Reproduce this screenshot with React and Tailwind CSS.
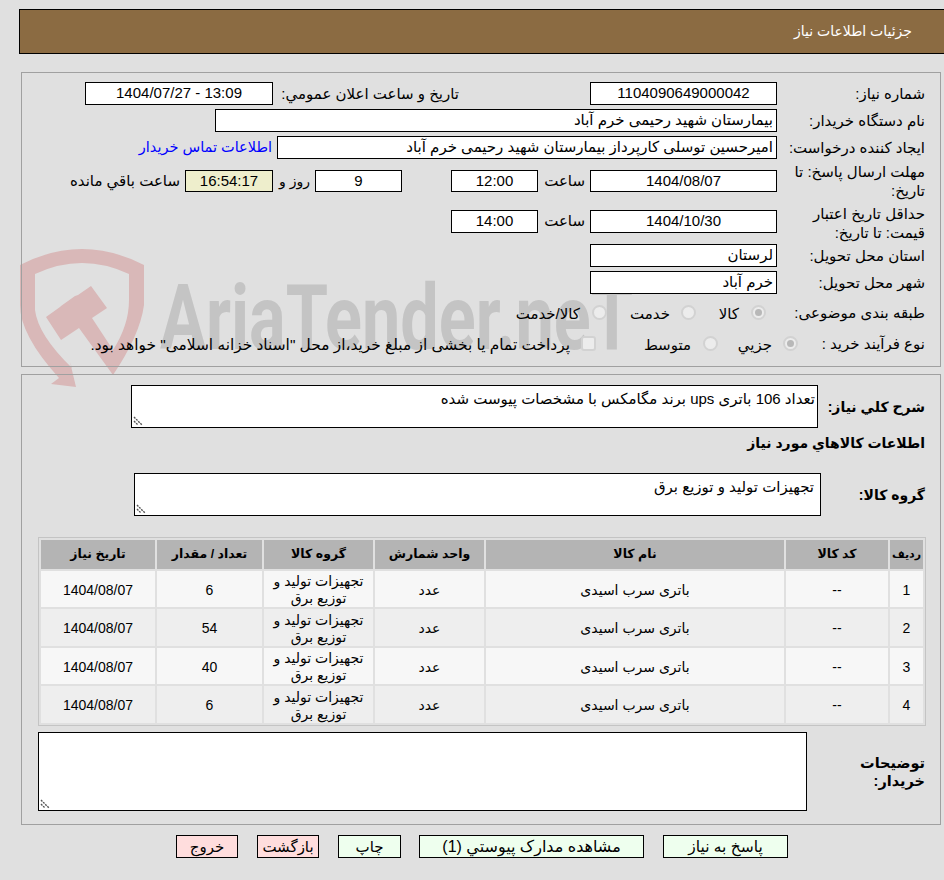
import React from "react";

const boxBase = "h-full shrink-0 border border-black bg-white flex items-center overflow-hidden whitespace-nowrap";

function Box({ w, center, children, extra = "" }) {
  return (
    <div className={`${boxBase} ${w} ${center ? "justify-center" : "justify-start pr-[3px]"} ${extra}`}>{children}</div>
  );
}

function Radio({ checked }) {
  return (
    <div className="flex h-[15px] w-[15px] shrink-0 items-center justify-center rounded-full border-2 border-[#d2d2d2] bg-[#ececec]">
      {checked ? <div className="h-[7px] w-[7px] rounded-full bg-[#b8b8b8]" /> : null}
    </div>
  );
}

function Grip() {
  return (
    <svg width="10" height="10" viewBox="0 0 10 10" className="absolute bottom-[1px] left-[1px]">
      <path d="M1 1 L9 9" stroke="#555555" strokeWidth="1.4" strokeDasharray="2 1" fill="none" />
      <path d="M1 5 L5 9" stroke="#555555" strokeWidth="1.4" strokeDasharray="2 1" fill="none" />
    </svg>
  );
}

function Btn({ w, pink, ms, size = "", children }) {
  return (
    <div
      className={`h-[23px] ${w} ${ms} ${size} shrink-0 border border-black pt-[1px] flex items-center justify-center whitespace-nowrap ${
        pink ? "bg-[#ffdddd]" : "bg-[#eeffee]"
      }`}
    >
      {children}
    </div>
  );
}

const rows = [
  { n: "1", q: "6", bg: "bg-[#f7f7f7]", h: "h-[36px]" },
  { n: "2", q: "54", bg: "bg-[#eeeeee]", h: "h-[37px]" },
  { n: "3", q: "40", bg: "bg-[#f7f7f7]", h: "h-[36px]" },
  { n: "4", q: "6", bg: "bg-[#eeeeee]", h: "h-[37px]" },
];

const th = "bg-[#b4b4b4] font-bold text-center text-[12.5px] p-0 whitespace-nowrap";
const td = "text-center p-0 pt-[2px] leading-[17px]";

export default function App() {
  return (
    <div
      dir="rtl"
      className="relative min-h-[880px] w-[944px] overflow-hidden bg-[#e0e0e0] text-[15px] text-black [font-family:'Liberation_Sans','DejaVu_Sans',sans-serif]"
    >
      {/* watermark */}
      <div aria-hidden="true" className="absolute left-0 top-0 z-0">
        <svg width="160" height="400" viewBox="0 0 160 400" className="absolute left-0 top-0">
          <path
            fill="#d9b8b8"
            d="M20 265 Q82 233 144 265 L144 305 Q140 335 113 375 L79 328 L61 340 L46 317 L60 307 L61 306 L75 296 L78 295 L91 286 L107 308 L92 318 L113 350 Q129 325 129 300 L129 274 Q82 252 35 274 L35 310 Q38 335 72 368 L70 362 L76 387 L51 384 L59 378 Q20 335 20 305 Z"
          />
        </svg>
        <span
          dir="ltr"
          className="absolute left-[160px] top-[264px] origin-left scale-x-[0.76] whitespace-nowrap text-[90px] font-bold leading-[110px] text-[#c4c4c4] [font-family:'Roboto',sans-serif]"
        >
          AriaTender.neT
        </span>
      </div>

      <div className="relative z-10">
        {/* header */}
        <div className="h-[9px]" />
        <div className="ml-[19px] -mr-[2px] h-[45px] border border-black bg-[#8b6b42] pr-[33px] flex items-center text-white text-[14px]">
          جزئیات اطلاعات نیاز
        </div>

        {/* panel 1 */}
        <div className="ml-[21px] mr-[3px] mt-[18px] border border-[#a0a0a0] pt-[9px] pb-[11px] pr-[15px]">
          <div className="flex h-[23px] items-center">
            <div className="w-[148px] shrink-0 pt-[2px]">شماره نیاز:</div>
            <Box w="w-[187px]" center>1104090649000042</Box>
            <div className="ms-[131px] w-[186px] shrink-0 pt-[2px] whitespace-nowrap">تاریخ و ساعت اعلان عمومي:</div>
            <Box w="w-[188px]" center><span dir="ltr">1404/07/27 - 13:09</span></Box>
          </div>
          <div className="mt-[4px] flex h-[23px] items-center">
            <div className="w-[148px] shrink-0 pt-[2px]">نام دستگاه خریدار:</div>
            <Box w="w-[562px]">بیمارستان شهید رحیمی خرم آباد</Box>
          </div>
          <div className="mt-[4px] flex h-[23px] items-center">
            <div className="w-[148px] shrink-0 pt-[2px] whitespace-nowrap">ایجاد کننده درخواست:</div>
            <Box w="w-[500px]">امیرحسین توسلی کارپرداز بیمارستان شهید رحیمی خرم آباد</Box>
            <div className="ms-[5px] whitespace-nowrap text-[14.5px] text-[#0000ff]">اطلاعات تماس خریدار</div>
          </div>
          <div className="mt-[5px] flex h-[34px] items-center">
            <div className="w-[148px] shrink-0 leading-[19px]">مهلت ارسال پاسخ: تا تاریخ:</div>
            <div className="flex h-[22px] items-center">
              <Box w="w-[187px]" center>1404/08/07</Box>
              <div className="w-[52px] shrink-0 pr-[5px] whitespace-nowrap">ساعت</div>
              <Box w="w-[87px]" center>12:00</Box>
              <Box w="w-[87px] ms-[49px]" center>9</Box>
              <div className="w-[42px] shrink-0 pr-[5px] whitespace-nowrap text-[14px]">روز و</div>
              <Box w="w-[88px]" center extra="bg-[#eeeecc]!">16:54:17</Box>
              <div className="pr-[5px] whitespace-nowrap">ساعت باقي مانده</div>
            </div>
          </div>
          <div className="mt-[6px] flex h-[35px] items-center">
            <div className="w-[148px] shrink-0 pt-[2px] leading-[19px]">حداقل تاریخ اعتبار قیمت: تا تاریخ:</div>
            <div className="flex h-[23px] items-center">
              <Box w="w-[187px]" center>1404/10/30</Box>
              <div className="w-[52px] shrink-0 pr-[5px] whitespace-nowrap">ساعت</div>
              <Box w="w-[87px]" center>14:00</Box>
            </div>
          </div>
          <div className="mt-[5px] flex h-[23px] items-center">
            <div className="w-[148px] shrink-0 pt-[2px]">استان محل تحویل:</div>
            <Box w="w-[187px]">لرستان</Box>
          </div>
          <div className="mt-[4px] flex h-[23px] items-center">
            <div className="w-[148px] shrink-0 pt-[2px]">شهر محل تحویل:</div>
            <Box w="w-[187px]">خرم آباد</Box>
          </div>
          <div className="mt-[7px] flex h-[23px] items-center">
            <div className="w-[159px] shrink-0 pt-[2px] whitespace-nowrap">طبقه بندی موضوعی:</div>
            <Radio checked />
            <div className="w-[55px] shrink-0 pt-[3px] pr-[12px] whitespace-nowrap">کالا</div>
            <Radio />
            <div className="w-[74px] shrink-0 pt-[3px] pr-[11px] whitespace-nowrap">خدمت</div>
            <Radio />
            <div className="pt-[3px] pr-[12px] whitespace-nowrap">کالا/خدمت</div>
          </div>
          <div className="mt-[8px] flex h-[23px] items-center">
            <div className="w-[127px] shrink-0 pt-[2px] whitespace-nowrap">نوع فرآیند خرید :</div>
            <Radio checked />
            <div className="w-[65px] shrink-0 pt-[3px] pr-[11px] whitespace-nowrap">جزیي</div>
            <Radio />
            <div className="w-[107px] shrink-0 pt-[3px] pr-[12px] whitespace-nowrap">متوسط</div>
            <div className="h-[15px] w-[15px] shrink-0 rounded-[3px] border-2 border-[#d2d2d2] bg-[#ececec]" />
            <div className="pt-[3px] pr-[11px] text-[15.4px] whitespace-nowrap">پرداخت تمام یا بخشی از مبلغ خرید،از محل "اسناد خزانه اسلامی" خواهد بود.</div>
          </div>
        </div>

        {/* panel 2 */}
        <div className="ml-[21px] mr-[3px] mt-[7px] border border-[#a0a0a0] pt-[10px] pb-[13px] pr-[15px]">
          <div className="flex h-[43px] items-center">
            <div className="w-[107px] shrink-0 pt-[2px] text-[14px] font-bold whitespace-nowrap">شرح کلي نیاز:</div>
            <div className="relative h-[43px] w-[687px] shrink-0 border border-black bg-white px-[2px] py-[2px]">
              تعداد 106 باتری ups برند مگامکس با مشخصات پیوست شده
              <Grip />
            </div>
          </div>
          <div className="mt-[3px] flex h-[24px] items-center text-[14px] font-bold">اطلاعات کالاهاي مورد نیاز</div>
          <div className="mt-[18px] flex h-[43px] items-center">
            <div className="w-[104px] shrink-0 pt-[2px] text-[14px] font-bold whitespace-nowrap">گروه کالا:</div>
            <div className="relative h-[43px] w-[687px] shrink-0 border border-black bg-white px-[6px] py-[2px]">
              تجهیزات تولید و توزیع برق
              <Grip />
            </div>
          </div>

          <table className="-mr-[1px] mt-[21px] w-[888px] table-fixed border-separate border-spacing-[2px] border border-[#c4c4c4] text-[14px]">
            <colgroup>
              <col className="w-[33px]" />
              <col className="w-[102px]" />
              <col className="w-[298px]" />
              <col className="w-[109px]" />
              <col className="w-[109px]" />
              <col className="w-[105px]" />
              <col className="w-[114px]" />
            </colgroup>
            <thead>
              <tr className="h-[29px]">
                <th className="bg-[#b4b4b4] p-0 text-center text-[11px] font-bold whitespace-nowrap">ردیف</th>
                <th className={th}>کد کالا</th>
                <th className={th}>نام کالا</th>
                <th className={th}>واحد شمارش</th>
                <th className={th}>گروه کالا</th>
                <th className={th}>تعداد / مقدار</th>
                <th className={th}>تاریخ نیاز</th>
              </tr>
            </thead>
            <tbody>
              {rows.map((r) => (
                <tr key={r.n} className={r.h}>
                  <td className={`${td} ${r.bg}`}>{r.n}</td>
                  <td className={`${td} ${r.bg}`}>--</td>
                  <td className={`${td} ${r.bg}`}>باتری سرب اسیدی</td>
                  <td className={`${td} ${r.bg}`}>عدد</td>
                  <td className={`${td} ${r.bg}`}>تجهیزات تولید و توزیع برق</td>
                  <td className={`${td} ${r.bg}`}>{r.q}</td>
                  <td className={`${td} ${r.bg}`}>1404/08/07</td>
                </tr>
              ))}
            </tbody>
          </table>

          <div className="mt-[6px] flex h-[79px] items-center">
            <div className="w-[118px] shrink-0 pl-[40px] text-[14.5px] font-bold leading-[18px]">توضیحات خریدار:</div>
            <div className="relative h-[79px] w-[769px] shrink-0 border border-black bg-white">
              <Grip />
            </div>
          </div>
        </div>

        {/* buttons */}
        <div className="mt-[10px] flex mr-[156px]">
          <Btn w="w-[125px]" size="text-[15.5px]">پاسخ به نیاز</Btn>
          <Btn w="w-[225px]" ms="ms-[19px]" size="text-[16px]">مشاهده مدارک پیوستي (1)</Btn>
          <Btn w="w-[63px]" ms="ms-[18px]">چاپ</Btn>
          <Btn w="w-[62px]" ms="ms-[19px]" pink>بازگشت</Btn>
          <Btn w="w-[62px]" ms="ms-[19px]" pink>خروج</Btn>
        </div>
      </div>
    </div>
  );
}
